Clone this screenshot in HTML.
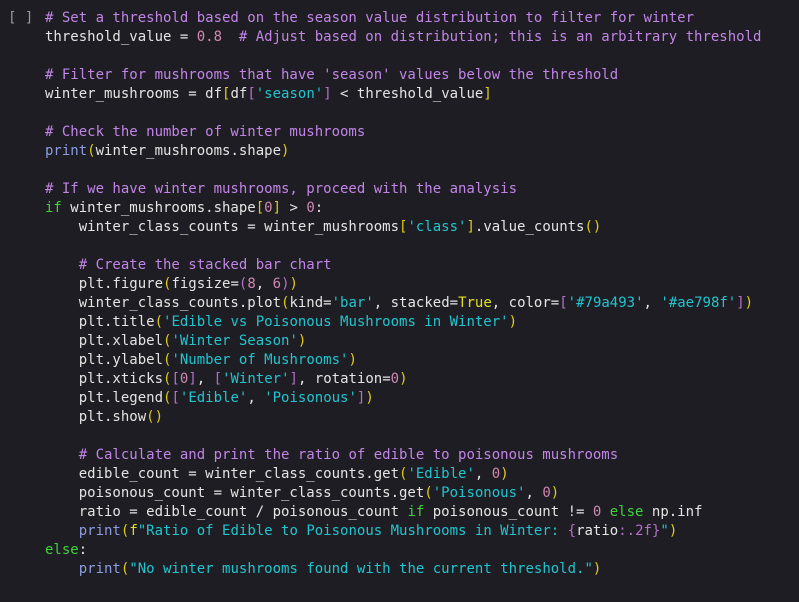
<!DOCTYPE html>
<html><head><meta charset="utf-8"><style>
html,body{margin:0;padding:0;background:#1e1d23;width:799px;height:602px;overflow:hidden}
.g{position:absolute;left:8px;top:9px;font:14px/19px "DejaVu Sans Mono",monospace;color:#9a9a9a;white-space:pre}
pre{position:absolute;left:45px;top:9px;margin:0;font:14px/19px "DejaVu Sans Mono",monospace;color:#e4e4e4;white-space:pre}
.c{color:#c285e6}.n{color:#d088b0}.s{color:#22c4cf}.y{color:#e0cc1a}.p{color:#b470c8}.k{color:#3ed23a}.b{color:#8c9ce0}.t{color:#e0e020}
</style></head><body>
<div class="g">[ ]</div>
<pre><span class="c"># Set a threshold based on the season value distribution to filter for winter</span>
threshold_value = <span class="n">0.8</span>  <span class="c"># Adjust based on distribution; this is an arbitrary threshold</span>

<span class="c"># Filter for mushrooms that have 'season' values below the threshold</span>
winter_mushrooms = df<span class="y">[</span>df<span class="p">[</span><span class="s">'season'</span><span class="p">]</span> &lt; threshold_value<span class="y">]</span>

<span class="c"># Check the number of winter mushrooms</span>
<span class="b">print</span><span class="y">(</span>winter_mushrooms.shape<span class="y">)</span>

<span class="c"># If we have winter mushrooms, proceed with the analysis</span>
<span class="k">if</span> winter_mushrooms.shape<span class="y">[</span><span class="n">0</span><span class="y">]</span> &gt; <span class="n">0</span>:
    winter_class_counts = winter_mushrooms<span class="y">[</span><span class="s">'class'</span><span class="y">]</span>.value_counts<span class="y">()</span>

    <span class="c"># Create the stacked bar chart</span>
    plt.figure<span class="y">(</span>figsize=<span class="p">(</span><span class="n">8</span>, <span class="n">6</span><span class="p">)</span><span class="y">)</span>
    winter_class_counts.plot<span class="y">(</span>kind=<span class="s">'bar'</span>, stacked=<span class="t">True</span>, color=<span class="p">[</span><span class="s">'#79a493'</span>, <span class="s">'#ae798f'</span><span class="p">]</span><span class="y">)</span>
    plt.title<span class="y">(</span><span class="s">'Edible vs Poisonous Mushrooms in Winter'</span><span class="y">)</span>
    plt.xlabel<span class="y">(</span><span class="s">'Winter Season'</span><span class="y">)</span>
    plt.ylabel<span class="y">(</span><span class="s">'Number of Mushrooms'</span><span class="y">)</span>
    plt.xticks<span class="y">(</span><span class="p">[</span><span class="n">0</span><span class="p">]</span>, <span class="p">[</span><span class="s">'Winter'</span><span class="p">]</span>, rotation=<span class="n">0</span><span class="y">)</span>
    plt.legend<span class="y">(</span><span class="p">[</span><span class="s">'Edible'</span>, <span class="s">'Poisonous'</span><span class="p">]</span><span class="y">)</span>
    plt.show<span class="y">()</span>

    <span class="c"># Calculate and print the ratio of edible to poisonous mushrooms</span>
    edible_count = winter_class_counts.get<span class="y">(</span><span class="s">'Edible'</span>, <span class="n">0</span><span class="y">)</span>
    poisonous_count = winter_class_counts.get<span class="y">(</span><span class="s">'Poisonous'</span>, <span class="n">0</span><span class="y">)</span>
    ratio = edible_count / poisonous_count <span class="k">if</span> poisonous_count != <span class="n">0</span> <span class="k">else</span> np.inf
    <span class="b">print</span><span class="y">(</span><span class="t">f</span><span class="s">"Ratio of Edible to Poisonous Mushrooms in Winter: </span><span class="p">{</span>ratio<span class="p">:.2f}</span><span class="s">"</span><span class="y">)</span>
<span class="k">else</span>:
    <span class="b">print</span><span class="y">(</span><span class="s">"No winter mushrooms found with the current threshold."</span><span class="y">)</span></pre>
</body></html>
